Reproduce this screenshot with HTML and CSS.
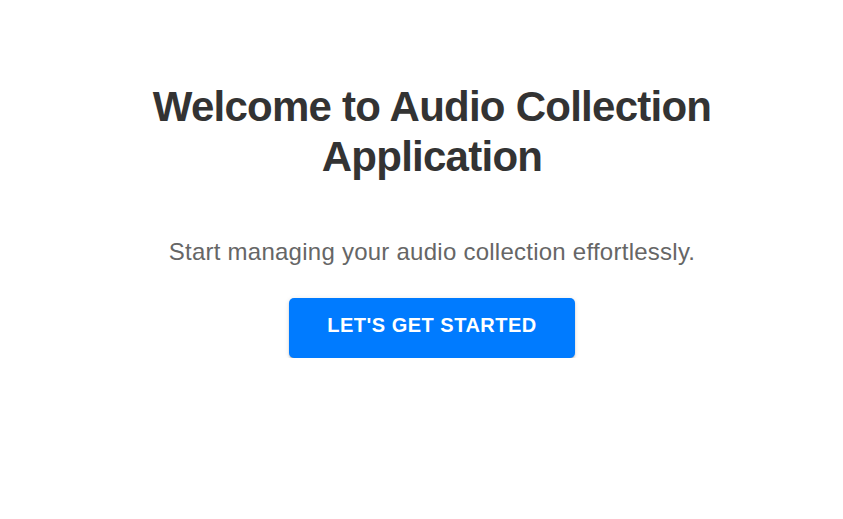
FILE: index.html
```html
<!DOCTYPE html>
<html lang="en">
<head>
<meta charset="utf-8">
<title>Audio Collection</title>
<link rel="stylesheet" href="styles.css">
</head>
<body>
<main class="welcome">
  <h1 class="welcome-title">Welcome to Audio Collection Application</h1>
  <p class="welcome-text">Start managing your audio collection effortlessly.</p>
  <button class="start-btn" type="button">LET'S GET STARTED</button>
</main>
</body>
</html>
```
FILE: styles.css
```css
html, body {
  margin: 0;
  padding: 0;
  background: #ffffff;
}
body {
  font-family: "Liberation Sans", Arial, sans-serif;
  padding-left: 21px;
}
.welcome {
  display: flex;
  flex-direction: column;
  align-items: center;
  text-align: center;
  max-width: 640px;
  margin: 0 auto;
  padding-top: 82px;
}
.welcome-title {
  margin: 0;
  font-size: 42px;
  line-height: 50px;
  font-weight: 700;
  letter-spacing: -0.75px;
  color: #333333;
}
.welcome-text {
  margin: 56px 0 0;
  font-size: 24px;
  line-height: 1.2;
  letter-spacing: 0.25px;
  color: #666666;
}
.start-btn {
  margin-top: 31px;
  width: 286px;
  height: 60px;
  border: none;
  border-radius: 5px;
  background: #007bff;
  color: #ffffff;
  font-family: "Liberation Sans", Arial, sans-serif;
  font-size: 20px;
  font-weight: 700;
  letter-spacing: 0.5px;
  box-shadow: 0 3px 1px -2px rgba(0,0,0,0.2), 0 2px 2px 0 rgba(0,0,0,0.14), 0 1px 5px 0 rgba(0,0,0,0.12);
  cursor: pointer;
  padding: 0 0 5px;
}
```
